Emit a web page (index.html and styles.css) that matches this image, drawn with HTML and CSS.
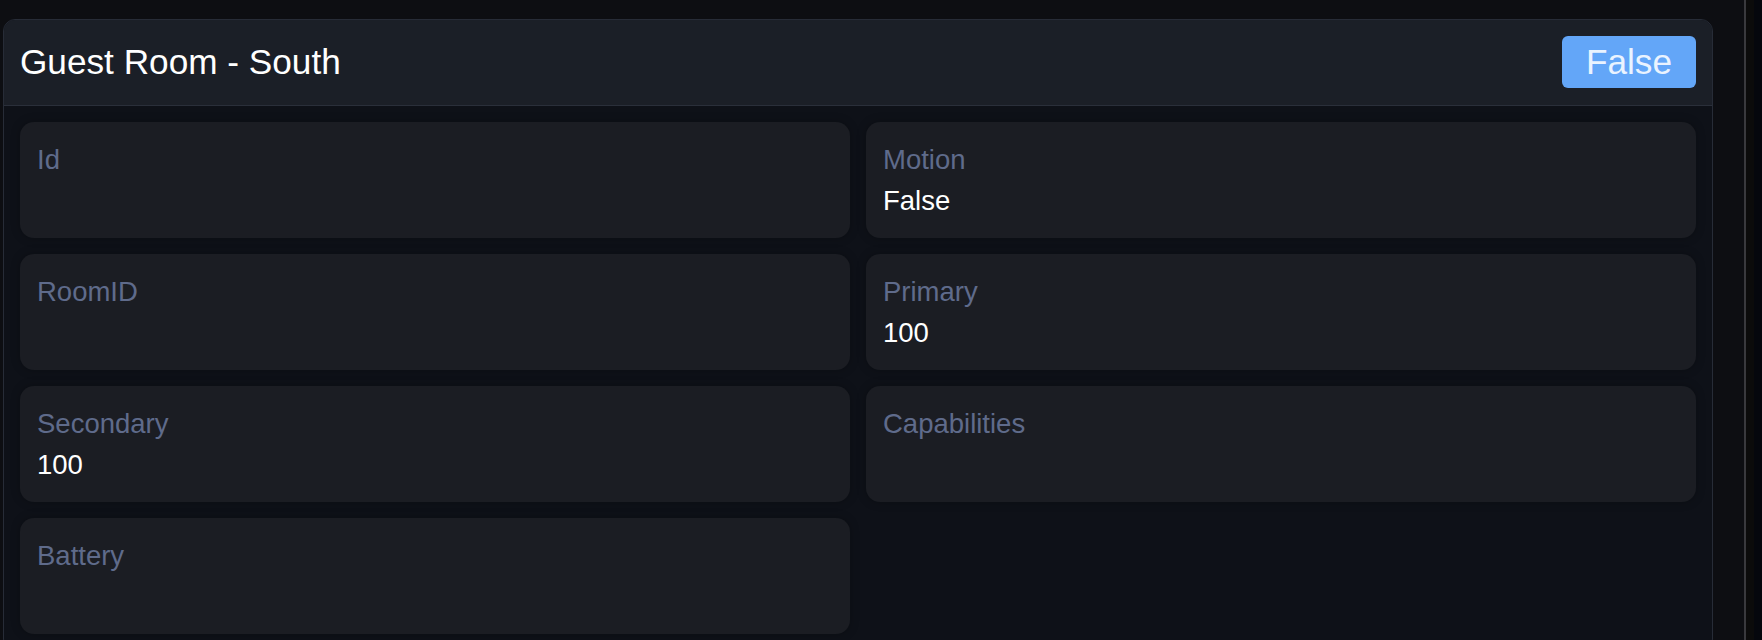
FILE: index.html
```html
<!DOCTYPE html>
<html lang="en">
<head>
<meta charset="utf-8">
<title>Guest Room - South</title>
<link rel="stylesheet" href="styles.css">
</head>
<body>
  <div class="page">
    <main class="main">
      <section class="panel">
        <header class="panel-header">
          <h1 class="panel-title">Guest Room - South</h1>
          <span class="badge">False</span>
        </header>
        <div class="panel-body">
          <div class="field">
            <div class="field-label">Id</div>
            <div class="field-value"></div>
          </div>
          <div class="field">
            <div class="field-label">Motion</div>
            <div class="field-value">False</div>
          </div>
          <div class="field">
            <div class="field-label">RoomID</div>
            <div class="field-value"></div>
          </div>
          <div class="field">
            <div class="field-label">Primary</div>
            <div class="field-value">100</div>
          </div>
          <div class="field">
            <div class="field-label">Secondary</div>
            <div class="field-value">100</div>
          </div>
          <div class="field">
            <div class="field-label">Capabilities</div>
            <div class="field-value"></div>
          </div>
          <div class="field">
            <div class="field-label">Battery</div>
            <div class="field-value"></div>
          </div>
        </div>
      </section>
    </main>
    <div class="gutter">
      <div class="gutter-track"></div>
      <div class="gutter-edge"></div>
    </div>
  </div>
</body>
</html>
```

FILE: styles.css
```css
* {
  box-sizing: border-box;
}

html,
body {
  margin: 0;
  padding: 0;
  height: 100%;
  overflow: hidden;
}

body {
  background: #0c0d11;
  font-family: "Liberation Sans", Arial, Helvetica, sans-serif;
  color: #ffffff;
}

.page {
  display: flex;
  height: 640px;
}

.main {
  flex: 1;
  padding: 19px 31px 0 3px;
  background: #0d0e12;
}

.panel {
  border: 1px solid #272c37;
  border-radius: 12px;
  background: #0e1118;
  overflow: hidden;
}

.panel-header {
  display: flex;
  align-items: center;
  justify-content: space-between;
  padding: 16px 16px 17px 16px;
  background: #1b1f27;
  border-bottom: 1px solid #2a2f3a;
}

.panel-title {
  margin: 0;
  font-size: 35.2px;
  font-weight: 400;
  line-height: 40px;
  color: #ffffff;
}

.badge {
  display: inline-block;
  padding: 6px 24px;
  font-size: 35.2px;
  line-height: 40px;
  border-radius: 6px;
  background: #63a6f8;
  color: #eaf3ff;
}

.panel-body {
  display: grid;
  grid-template-columns: 1fr 1fr;
  gap: 16px;
  padding: 16px;
}

.field {
  background: #1b1d23;
  border-radius: 14px;
  padding: 18px 15px 16px 17px;
  box-shadow: 0 0 10px rgba(0, 0, 0, 0.25);
}

.field-label {
  font-size: 27.5px;
  line-height: 40px;
  color: #5f6b8b;
}

.field-value {
  font-size: 27.5px;
  line-height: 42px;
  height: 42px;
  color: #ffffff;
}

.gutter {
  width: 18px;
  display: flex;
  border-left: 2px solid #39393d;
  background: #0b0b0b;
}

.gutter-track {
  flex: 1;
}

.gutter-edge {
  width: 8px;
  background: #05070d;
}
```
